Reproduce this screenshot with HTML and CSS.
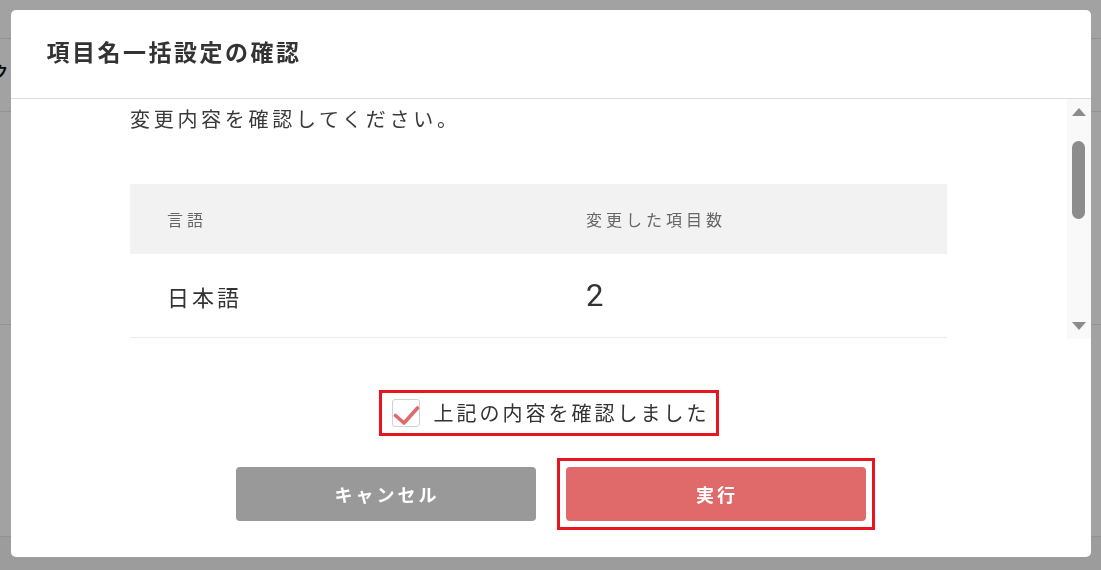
FILE: index.html
```html
<!DOCTYPE html>
<html lang="ja">
<head>
<meta charset="utf-8">
<title>項目名一括設定の確認</title>
<link rel="stylesheet" href="styles.css">
</head>
<body>
<div class="page">
  <div class="page-top"></div>
  <div class="page-row"><div class="page-label"><span>ブロック</span></div></div>
  <div class="page-main"></div>
  <div class="page-rest"></div>
  <div class="page-foot"></div>
</div>
<div class="overlay">
  <div class="modal">
    <div class="modal-header">
      <h1 class="modal-title">項目名一括設定の確認</h1>
    </div>
    <div class="modal-body">
      <div class="scroll-content">
        <p class="intro">変更内容を確認してください。</p>
        <div class="summary">
          <div class="summary-head">
            <div class="cell">言語</div>
            <div class="cell">変更した項目数</div>
          </div>
          <div class="summary-row">
            <div class="cell lang">日本語</div>
            <div class="cell count">2</div>
          </div>
        </div>
      </div>
      <div class="scrollbar">
        <div class="arrow arrow-up"></div>
        <div class="thumb"></div>
        <div class="track-space"></div>
        <div class="arrow arrow-down"></div>
      </div>
    </div>
    <div class="modal-footer">
      <label class="confirm">
        <span class="checkbox">
          <svg width="26" height="26" viewBox="0 0 26 26"><path d="M2.5 15.5 L11 23 L24.5 8" fill="none" stroke="#e06a6a" stroke-width="3.6" stroke-linecap="round" stroke-linejoin="round"/></svg>
        </span>
        <span class="confirm-text">上記の内容を確認しました</span>
      </label>
      <div class="actions">
        <button class="btn btn-cancel" type="button">キャンセル</button>
        <span class="run-wrap"><button class="btn btn-run" type="button">実行</button></span>
      </div>
    </div>
  </div>
</div>
</body>
</html>
```
FILE: styles.css
```css
* { box-sizing: border-box; }
html, body { margin: 0; padding: 0; }
body {
  width: 1101px;
  height: 570px;
  overflow: hidden;
  background: #fff;
  font-family: "Noto Sans CJK JP", "Noto Sans", sans-serif;
  color: #333;
}
.page {
  display: flex;
  flex-direction: column;
  height: 570px;
}
.page-top { height: 39px; border-bottom: 1px solid #e6e6e6; }
.page-row {
  height: 73px;
  border-bottom: 1px solid #e6e6e6;
  display: flex;
  align-items: center;
}
.page-label {
  width: 8px;
  display: flex;
  justify-content: flex-end;
  white-space: nowrap;
  font-weight: 700;
  font-size: 15px;
  color: #111;
  margin-top: -10px;
}
.page-main { height: 213px; border-bottom: 1px solid #e6e6e6; }
.page-rest { flex: 1; }
.page-foot { height: 34px; background: #f6f6f6; border-top: 1px solid #e6e6e6; }

.overlay {
  position: fixed;
  inset: 0;
  background: rgba(0, 0, 0, 0.365);
  padding: 10px;
  display: flex;
  justify-content: center;
  align-items: flex-start;
}
.modal {
  width: 1080px;
  background: #fff;
  border-radius: 5px;
  overflow: hidden;
}
.modal-header {
  height: 89px;
  border-bottom: 1px solid #dcdcdc;
  display: flex;
  align-items: center;
  padding: 0 36px 7px;
}
.modal-title {
  margin: 0;
  font-size: 23px;
  font-weight: 700;
  letter-spacing: 2.5px;
  color: #333;
  line-height: 30px;
  white-space: nowrap;
}
.modal-body {
  display: flex;
  height: 240px;
}
.scroll-content {
  flex: 1;
  overflow: hidden;
  padding-top: 6px;
  display: flex;
  flex-direction: column;
  align-items: center;
}
.intro {
  width: 817px;
  margin: 0;
  font-size: 20px;
  line-height: 28px;
  letter-spacing: 3.7px;
  color: #3a3a3a;
}
.summary {
  width: 817px;
  margin-top: 51px;
}
.summary-head, .summary-row {
  display: grid;
  grid-template-columns: 419px 1fr;
  align-items: center;
}
.summary-head {
  height: 70px;
  background: #f2f2f2;
}
.summary-head .cell {
  padding-left: 37px;
  font-size: 16px;
  letter-spacing: 4px;
  color: #666;
  line-height: 22px;
}
.summary-row {
  height: 84px;
  border-bottom: 1px solid #ececec;
}
.summary-row .cell { padding-left: 37px; color: #333; }
.lang {
  font-size: 22px;
  letter-spacing: 3px;
  line-height: 30px;
}
.count {
  font-family: Roboto, "Liberation Sans", sans-serif;
  font-size: 31px;
  line-height: 36px;
}
.scrollbar {
  width: 24px;
  background: #f9f9f9;
  display: flex;
  flex-direction: column;
  align-items: center;
  padding: 9px 0 9px;
}
.arrow {
  width: 0;
  height: 0;
  border-left: 7.5px solid transparent;
  border-right: 7.5px solid transparent;
}
.arrow-up { border-bottom: 8px solid #8c8c8c; }
.arrow-down { border-top: 8px solid #8c8c8c; }
.thumb {
  margin-top: 25px;
  width: 13px;
  height: 78px;
  border-radius: 7px;
  background: #8c8c8c;
}
.track-space { flex: 1; }

.modal-footer {
  padding: 54px 0 36px;
  display: flex;
  flex-direction: column;
  align-items: center;
}
.confirm {
  display: inline-flex;
  align-items: center;
  gap: 14px;
  height: 40px;
  padding: 0 6px 0 10px;
  outline: 3px solid #e8151e;
  margin-left: -4px;
  cursor: pointer;
}
.checkbox {
  width: 28px;
  height: 28px;
  border: 1px solid #d2d2d2;
  border-radius: 3px;
  background: #fff;
  display: flex;
  align-items: center;
  justify-content: center;
}
.checkbox svg { display: block; }
.confirm-text {
  font-size: 20px;
  letter-spacing: 3px;
  line-height: 28px;
  color: #333;
  white-space: nowrap;
}
.actions {
  margin-top: 34px;
  display: flex;
  gap: 30px;
}
.btn {
  width: 300px;
  height: 54px;
  border: none;
  border-radius: 4px;
  color: #fff;
  font-family: "Noto Sans CJK JP", "Noto Sans", sans-serif;
  font-size: 18px;
  font-weight: 700;
  letter-spacing: 3px;
  padding: 0 0 0 3px;
  display: block;
}
.btn-cancel { background: #999999; }
.run-wrap {
  display: block;
  border: 3px solid #e8151e;
  padding: 6px;
  margin: -9px;
}
.btn-run { background: #e06a6a; }
```
